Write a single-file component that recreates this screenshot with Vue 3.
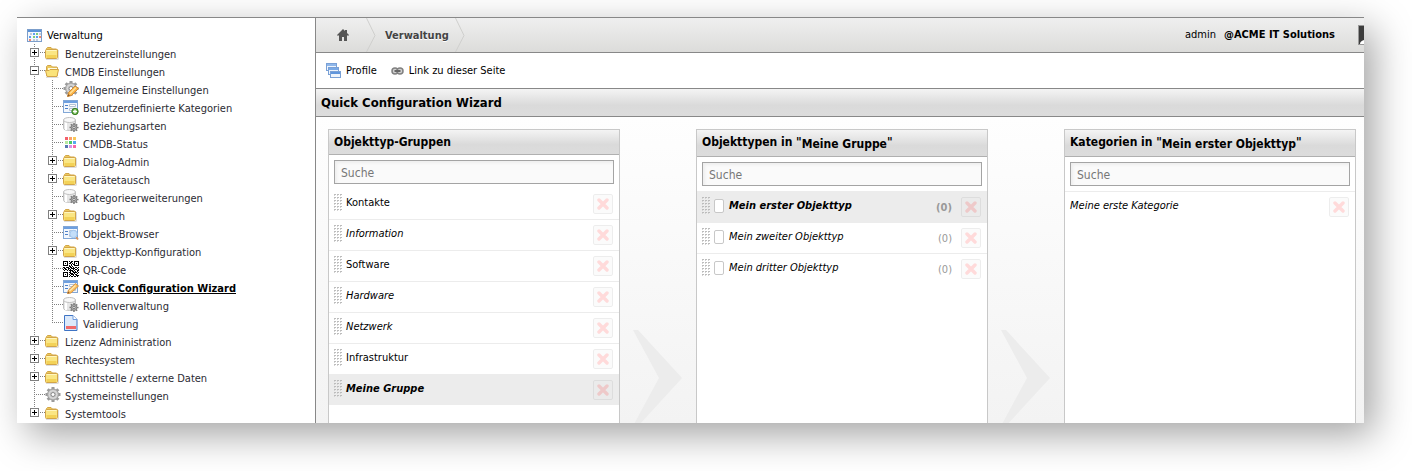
<script setup>
import { ref } from 'vue'

// guides: v = vertical line, j = joint, e = last joint, p/m = plus/minus toggle, q = last plus toggle
const tree = [
  { guides: '', icon: 'calendar', label: 'Verwaltung', root: true },
  { guides: 'p', icon: 'folder', label: 'Benutzereinstellungen' },
  { guides: 'm', icon: 'open', label: 'CMDB Einstellungen' },
  { guides: 'vj', icon: 'gearpen', label: 'Allgemeine Einstellungen' },
  { guides: 'vj', icon: 'formadd', label: 'Benutzerdefinierte Kategorien' },
  { guides: 'vj', icon: 'database', label: 'Beziehungsarten' },
  { guides: 'vj', icon: 'palette', label: 'CMDB-Status' },
  { guides: 'vp', icon: 'folder', label: 'Dialog-Admin' },
  { guides: 'vp', icon: 'folder', label: 'Gerätetausch' },
  { guides: 'vj', icon: 'database', label: 'Kategorieerweiterungen' },
  { guides: 'vp', icon: 'folder', label: 'Logbuch' },
  { guides: 'vj', icon: 'formsearch', label: 'Objekt-Browser' },
  { guides: 'vp', icon: 'folder', label: 'Objekttyp-Konfiguration' },
  { guides: 'vj', icon: 'qr', label: 'QR-Code' },
  { guides: 'vj', icon: 'formpen', label: 'Quick Configuration Wizard', active: true },
  { guides: 'vj', icon: 'database', label: 'Rollenverwaltung' },
  { guides: 've', icon: 'page', label: 'Validierung' },
  { guides: 'p', icon: 'folder', label: 'Lizenz Administration' },
  { guides: 'p', icon: 'folder', label: 'Rechtesystem' },
  { guides: 'p', icon: 'folder', label: 'Schnittstelle / externe Daten' },
  { guides: 'j', icon: 'gear', label: 'Systemeinstellungen' },
  { guides: 'q', icon: 'folder', label: 'Systemtools' },
]

const groups = [
  { label: 'Kontakte' },
  { label: 'Information', italic: true },
  { label: 'Software' },
  { label: 'Hardware', italic: true },
  { label: 'Netzwerk', italic: true },
  { label: 'Infrastruktur' },
  { label: 'Meine Gruppe', italic: true, selected: true },
]
const types = [
  { label: 'Mein erster Objekttyp', count: 0, selected: true },
  { label: 'Mein zweiter Objekttyp', count: 0 },
  { label: 'Mein dritter Objekttyp', count: 0 },
]
const categories = [{ label: 'Meine erste Kategorie' }]

const columns = [
  { id: 'groups', title: 'Objekttyp-Gruppen', items: groups, handle: true },
  { id: 'types', title: 'Objekttypen in', subject: 'Meine Gruppe', items: types, handle: true, badge: true },
  { id: 'categories', title: 'Kategorien in', subject: 'Mein erster Objekttyp', items: categories },
]
const search = ref({ groups: '', types: '', categories: '' })

const qrRows = [
  '1111101011011111',
  '1000100110010001',
  '1010101101010101',
  '1000100010110001',
  '1111101010011111',
  '0000001101000000',
  '1101110110101101',
  '0110011011110010',
  '1011010100101101',
  '0100101111010011',
  '0000000101101010',
  '1111101100111101',
  '1000100111010010',
  '1010101011101100',
  '1000100100100111',
  '1111101011011010',
]
const qrPath = qrRows
  .flatMap((row, y) => [...row].map((c, x) => (c === '1' ? `M${x} ${y}h1v1h-1z` : '')))
  .join('')
const swatches = ['#f4606c', '#f9a06c', '#f8c85a', '#b8e8a0', '#4cc868', '#58a8f0', '#5878b0', '#d890e8', '#f868a8']
const gripDots = Array.from({ length: 18 }, (_, i) => ({ x: (i % 3) * 3, y: Math.floor(i / 3) * 3 }))
const teeth = [0, 45, 90, 135, 180, 225, 270, 315]
</script>

<template>
  <div class="page">
    <div class="window">
      <nav class="sidebar" aria-label="Verwaltung">
        <ul class="tree">
          <li v-for="n in tree" :key="n.label" class="node">
            <svg v-for="(g, i) in n.guides" :key="i" class="guide" width="18" height="18" viewBox="0 0 18 18" shape-rendering="crispEdges">
              <path class="dots" :d="g === 'e' || g === 'q' ? 'M9.5 0V9' : 'M9.5 0V18'" />
              <path v-if="g !== 'v'" class="dots" d="M9 8.5H20" />
              <g v-if="'pmq'.includes(g)">
                <rect x="5.5" y="4.5" width="8" height="8" fill="#fff" stroke="#808080" />
                <path :d="g === 'm' ? 'M7 8.5h5' : 'M7 8.5h5M9.5 6v5'" stroke="#000" fill="none" />
              </g>
            </svg>
            <svg class="icon" width="16" height="18" viewBox="0 0 16 18">
              <g v-if="n.icon === 'calendar'">
                <rect x=".5" y="3.500" width="14" height="12" fill="#f4f8fd" stroke="#7c9ecb" />
                <path d="M1 4h13v2H1z" fill="#5b93d8" />
                <path d="M6 7h2v2H6zM2 10h2v2H2zM9 10h2v2H9z" fill="#5a9ff0" />
                <path d="M3 7h2v2H3zM12 7h2v2h-2zM6 13h2v2H6zM9 13h2v2H9z" fill="#c3ccd8" />
                <path d="M9 7h2v2H9zM6 10h2v2H6z" fill="#7ccc7c" />
                <path d="M12 10h2v2h-2zM2 13h2v2H2z" fill="#f2876f" />
              </g>
              <g v-else-if="n.icon === 'folder'">
                <path d="M1 15.500h12.500M13.500 6v9" stroke="#ddd" />
                <path d="M1.500 6V4.500l1-1h3.500l1.500 1.500h4l1 1v3h-11z" fill="#ecc95c" stroke="#d3a548" />
                <rect x=".5" y="5.500" width="12" height="9" rx="1" fill="#fae684" stroke="#d3a548" />
                <path d="M1.500 6.500h10" stroke="#fff6c0" />
                <path d="M1.500 11h10v3h-10z" fill="#f3d258" />
              </g>
              <g v-else-if="n.icon === 'open'">
                <path d="M1 15.500h12.500" stroke="#ddd" />
                <path d="M1.500 13.500V4.500l1-1h3.500l1.500 1.500h4.500l.5.5v8z" fill="#ecc95c" stroke="#d3a548" />
                <path d="M3 7h9" stroke="#fffbe0" stroke-width="2" />
                <path d="M.5 8.500h3.500l1-1h8.500l-1.500 7h-10z" fill="#fae37a" stroke="#d3a548" />
              </g>
              <g v-else-if="n.icon === 'gear' || n.icon === 'gearpen'">
                <rect v-for="t in teeth" :key="t" x="6.500" y="1" width="3" height="4" fill="#9a9a9a" :transform="`rotate(${t} 8 8.500)`" />
                <circle cx="8" cy="8.500" r="5.500" fill="#c4c4c4" stroke="#a0a0a0" />
                <circle cx="8" cy="8.500" r="3.800" fill="none" stroke="#dcdcdc" />
                <circle cx="8" cy="8.500" r="2" fill="#fff" stroke="#8c8c8c" />
                <g v-if="n.icon === 'gearpen'">
                  <path d="M4.500 16.500l1-4 6.500-6.500 3.500 2.500-7 7z" fill="#fbb447" stroke="#d08a34" />
                  <path d="M7 13.500l6-6" stroke="#ffe29a" stroke-width="1.500" />
                  <path d="M4.500 16.500l.7-2.500 1.800 1.800z" fill="#8a5a2a" />
                </g>
              </g>
              <g v-else-if="n.icon.startsWith('form')">
                <rect x=".5" y="2.500" width="14" height="12" fill="#f3f7fc" stroke="#82a7d6" />
                <path d="M1 3h13v2H1z" fill="#6d9fe0" />
                <path d="M2 7.500h3M2 10.500h3" stroke="#4d80c8" />
                <path d="M6.500 6.500h6v2h-6zM6.500 10.500h6v2h-6z" fill="#fff" stroke="#b4c2d4" />
                <g v-if="n.icon === 'formadd'">
                  <circle cx="12" cy="13.500" r="3.200" fill="#5fae3e" stroke="#3c7f26" />
                  <path d="M10 13.500h4M12 11.500v4" stroke="#fff" stroke-width="1.300" />
                </g>
                <g v-else-if="n.icon === 'formsearch'">
                  <path d="M13 13l2 2.500" stroke="#d99660" stroke-width="2" />
                  <circle cx="10.500" cy="10" r="3.700" fill="#c4def9" stroke="#a2c6ee" />
                </g>
                <g v-else>
                  <path d="M4.500 15.500l1-3.500 7-6.500 3 2.500-7.500 7z" fill="#fbbd58" stroke="#d6954a" />
                  <path d="M6.500 13l6-5.500" stroke="#ffe7ae" stroke-width="1.500" />
                  <path d="M4.500 15.500l.6-2 1.500 1.400z" fill="#84572c" />
                </g>
              </g>
              <g v-else-if="n.icon === 'database'">
                <path d="M.5 4v8.500c0 2.500 12 2.500 12 0V4z" fill="#e6e6e6" stroke="#c0c0c0" />
                <path d="M3 6v8" stroke="#fff" stroke-width="2" />
                <ellipse cx="6.500" cy="4" rx="6" ry="2.500" fill="#f8f8f8" stroke="#c0c0c0" />
                <rect v-for="t in teeth" :key="t" x="10.300" y="7" width="1.500" height="3" fill="#7c7c7c" :transform="`rotate(${t} 11 11.500)`" />
                <circle cx="11" cy="11.500" r="2.900" fill="#b4b4b4" stroke="#808080" />
                <circle cx="11" cy="11.500" r="1.200" fill="#f4f4f4" stroke="#777" />
              </g>
              <g v-else-if="n.icon === 'palette'">
                <rect v-for="(c, i) in swatches" :key="c" :x="2 + (i % 3) * 4" :y="3 + Math.floor(i / 3) * 4" width="3" height="3" :fill="c" />
              </g>
              <path v-else-if="n.icon === 'qr'" :d="qrPath" fill="#000" transform="translate(0 1)" shape-rendering="crispEdges" />
              <g v-else>
                <path d="M1.500 1.500h8.500l4 4v11h-12.500z" fill="#dce9fa" stroke="#3f74c4" />
                <path d="M10 1.500v4h4" fill="#fff" stroke="#6f9bdc" />
                <path d="M3 12h10v3H3z" fill="#f06a6a" />
              </g>
            </svg>
            <a href="#" class="label" :class="{ active: n.active, root: n.root }">{{ n.label }}</a>
          </li>
        </ul>
      </nav>

      <div class="main">
        <header class="topbar">
          <a href="#" class="home" aria-label="Startseite">
            <svg width="12" height="12" viewBox="0 0 12 12"><path d="M6 0L0 6l1 1 1-1v6h3V8h2v4h3V6l1 1 1-1-2-2V1H8v1z" fill="#555" /></svg>
          </a>
          <svg class="sep" width="10" height="34" viewBox="0 0 10 34"><path d="M.5 0L9 17.500.5 34" fill="none" stroke="#cfcfcd" /></svg>
          <a href="#" class="crumb">Verwaltung</a>
          <svg class="sep" width="10" height="34" viewBox="0 0 10 34"><path d="M.5 0L9 17.500.5 34" fill="none" stroke="#cfcfcd" /></svg>
          <div class="user">
            <span>admin</span>
            <b>@ACME IT Solutions</b>
            <svg width="6" height="20" viewBox="0 0 6 20"><path d="M0 0h6v20H0z" fill="#999" /><path d="M1 1h5v18H1z" fill="#3c3c3c" /><path d="M2 19c0-2 1-3 4-4v4z" fill="#fff" /></svg>
          </div>
        </header>

        <div class="toolbar">
          <a href="#" class="tool">
            <svg width="15" height="16" viewBox="0 0 15 16">
              <g fill="#eef4fc" stroke="#79a0d6">
                <rect x=".5" y=".5" width="10" height="7" /><path d="M1 1h9v2H1z" fill="#8fb7ea" stroke="none" />
                <rect x="2.500" y="4.500" width="10" height="7" /><path d="M3 5h9v2H3z" fill="#79a9e6" stroke="none" />
                <rect x="4.500" y="8.500" width="10" height="6" /><path d="M5 9h9v2H5z" fill="#5f95dc" stroke="none" />
              </g>
            </svg>
            Profile
          </a>
          <a href="#" class="tool">
            <svg width="13" height="8" viewBox="0 0 13 8">
              <rect x="1" y="1" width="6" height="6" rx="3" fill="#d0d0d0" stroke="#808080" stroke-width="1.500" />
              <rect x="6" y="1" width="6" height="6" rx="3" fill="#d0d0d0" stroke="#808080" stroke-width="1.500" />
              <path d="M3.500 4h6" stroke="#666" stroke-width="2" />
            </svg>
            Link zu dieser Seite
          </a>
        </div>

        <h1 class="title">Quick Configuration Wizard</h1>

        <div class="board">
          <template v-for="(col, ci) in columns" :key="col.id">
            <div v-if="ci" class="gap">
              <svg width="50" height="96" viewBox="0 0 50 96"><path d="M0 0h5l44 48L5 96H0l26-48z" fill="#ececec" /></svg>
            </div>
            <section class="column">
              <h2 class="head" :class="{ tall: col.subject }">
                {{ col.title }}<template v-if="col.subject">&nbsp;"<span class="subject">{{ col.subject }}</span>"</template>
              </h2>
              <div class="filter">
                <input v-model="search[col.id]" type="text" placeholder="Suche" :aria-label="`Suche ${col.title}`">
              </div>
              <ul class="rows" :class="{ borderless: !col.subject }">
                <li v-for="it in col.items" :key="it.label" class="row" :class="{ selected: it.selected }">
                  <svg v-if="col.handle" class="grip" width="8" height="17" viewBox="0 0 8 17" shape-rendering="crispEdges">
                    <g v-for="d in gripDots" :key="`${d.x}-${d.y}`">
                      <rect :x="d.x" :y="d.y" width="2" height="1" fill="#bcbcbc" />
                      <rect :x="d.x" :y="d.y + 1" width="1" height="1" fill="#d4d4d4" />
                    </g>
                  </svg>
                  <span v-if="col.badge" class="chip"></span>
                  <span class="name" :class="{ italic: it.italic || col.subject }">{{ it.label }}</span>
                  <span v-if="col.badge" class="count">({{ it.count }})</span>
                  <button type="button" class="remove" :aria-label="`${it.label} entfernen`">
                    <svg width="12" height="12" viewBox="0 0 12 12"><path d="M2 2l8 8M10 2l-8 8" stroke="#f00" stroke-width="3.400" stroke-linecap="round" /></svg>
                  </button>
                </li>
              </ul>
            </section>
          </template>
        </div>
      </div>
    </div>
  </div>
</template>

<style>
body { background: #fff; }
</style>

<style scoped>
.page {
  box-sizing: border-box;
  height: 100vh;
  padding: 17px 48px 48px 17px;
  overflow: hidden;
  font: 11px/18px 'DejaVu Sans Condensed', 'DejaVu Sans', sans-serif;
  color: #000;
}
.window {
  box-sizing: border-box;
  display: flex;
  height: 100%;
  border-top: 1px solid #888;
  background: #fff;
  box-shadow: 10px 12px 36px rgba(0, 0, 0, .36);
}
a { color: inherit; text-decoration: none; }
ul { list-style: none; margin: 0; padding: 0; }

.sidebar {
  flex: 0 0 298px;
  overflow: hidden;
  border-right: 1px solid #888;
}
.tree { padding: 8px 0 0 8px; }
.node { display: flex; height: 18px; white-space: nowrap; }
.guide { flex: none; overflow: visible; }
.dots { stroke: #808080; stroke-dasharray: 1 1; fill: none; }
.icon { flex: none; margin: 0 4px 0 2px; }
.label { padding-top: 2px; color: #2b2b33; }
.label.root { padding-top: 1px; color: #000; }
.label.active { color: #000; font-weight: bold; text-decoration: underline; }

.main {
  flex: 1;
  min-width: 0;
  display: flex;
  flex-direction: column;
  overflow: hidden;
}
.topbar {
  flex: none;
  display: flex;
  align-items: center;
  height: 34px;
  border-bottom: 1px solid #888;
  background: linear-gradient(#efefef, #dcdcda);
}
.home { display: flex; padding: 0 17px 0 21px; }
.sep { flex: none; }
.crumb { padding: 2px 6px 0 9px; font-weight: bold; color: #444; text-shadow: 0 1px 0 #fff; }
.user { display: flex; align-items: center; gap: 8px; margin-left: auto; }
.user svg { margin-left: 15px; }

.toolbar {
  flex: none;
  display: flex;
  align-items: center;
  gap: 14px;
  height: 35px;
  padding-left: 10px;
  border-bottom: 1px solid #888;
}
.tool { display: flex; align-items: center; gap: 5px; }

.title {
  flex: none;
  margin: 0;
  padding-left: 5px;
  border-bottom: 1px solid #888;
  background: linear-gradient(#f4f4f4, #dadada 60%, #dcdcdc);
  font-size: 13px;
  line-height: 27px;
}

.board {
  flex: 1;
  min-height: 0;
  display: flex;
  padding: 12px 8px 0 12px;
  background: linear-gradient(#fefefe, #f3f3f3);
}
.column {
  flex: 1;
  min-width: 0;
  overflow: hidden;
  border: 1px solid #c8c8c8;
  border-bottom: 0;
  background: #fff;
}
.gap {
  flex: 0 0 76px;
  box-sizing: border-box;
  padding: 201px 0 0 13px;
  overflow: hidden;
}
.gap svg { display: block; }
.head {
  height: 24px;
  margin: 0;
  padding-left: 5px;
  border-bottom: 1px solid #b0b0b0;
  background: linear-gradient(#f4f4f4, #dadada 60%, #dcdcdc);
  font-size: 12px;
  line-height: 25px;
  white-space: nowrap;
}
.head.tall { padding-bottom: 2px; }
.subject { display: inline-block; line-height: 20px; vertical-align: -2px; }
.filter { padding: 5px 5px 0; }
.filter input {
  box-sizing: border-box;
  display: block;
  width: 100%;
  height: 24px;
  margin: 0;
  padding: 1px 6px 0;
  border: 1px solid #a4a4a4;
  border-radius: 0;
  outline: 0;
  background: #fafafa;
  box-shadow: inset 2px 2px 3px #eee;
  font: 12px 'DejaVu Sans Condensed', 'DejaVu Sans', sans-serif;
}
.filter input::placeholder { color: #777; opacity: 1; }

.rows { padding-top: 5px; }
.rows.borderless { padding-top: 4px; }
.row {
  box-sizing: border-box;
  display: flex;
  align-items: flex-start;
  height: 31px;
  padding: 5px 6px 0 5px;
  border-top: 1px solid #ececec;
}
.borderless .row:first-child { border-top-color: transparent; }
.row.selected { background: #ececec; }
.grip { margin-right: 4px; }
.chip {
  box-sizing: border-box;
  width: 10px;
  height: 14px;
  margin: 2px 5px 0 0;
  border: 1px solid #c8c8c8;
  border-radius: 2px;
  background: #fff;
}
.name { flex: 1; }
.italic { font-style: italic; }
.selected .name, .selected .count { font-weight: bold; }
.count { padding-top: 2px; margin-right: 9px; color: #999; }
.remove {
  box-sizing: border-box;
  display: grid;
  place-items: center;
  width: 20px;
  height: 20px;
  padding: 0;
  border: 1px solid #888;
  border-radius: 2px;
  background: #e8e8e8;
  opacity: .14;
}
</style>
